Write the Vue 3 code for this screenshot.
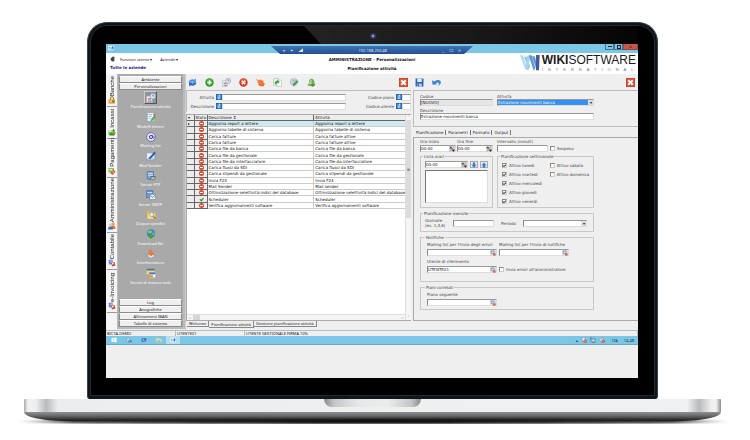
<script setup>
import { ref } from 'vue'

const modules = [
  { name: 'Banche', icon: 'lock', length: 31 },
  { name: 'Incassi', icon: 'in', length: 32 },
  { name: 'Pagamenti', icon: 'out', length: 39 },
  { name: 'Amministrazione', icon: 'people', length: 55 },
  { name: 'Contabile', icon: 'ledger', length: 37 },
  { name: 'e-Invoicing', icon: 'ledger', length: 43 }
]
const tools = [
  { name: 'Pianificazione attività', icon: 'plan' },
  { name: 'Modelli lettere', icon: 'doc' },
  { name: 'Mailing list', icon: 'at' },
  { name: 'Mail Sender', icon: 'pen' },
  { name: 'Server FTP', icon: 'server' },
  { name: 'Server SMTP', icon: 'smtp' },
  { name: 'Output specifici', icon: 'folder' },
  { name: 'Download file', icon: 'globe' },
  { name: 'Interfacciatore', icon: 'plug' },
  { name: 'Servizi di incasso web', icon: 'web' }
]
const sections = ['Log', 'Anagrafiche', 'Allineamenti IBAN', 'Tabelle di sistema']
const actions = [
  { name: 'Aggiorna', icon: 'refresh' },
  { name: 'Nuovo', icon: 'add' },
  { name: 'Pianifica', icon: 'plan' },
  { name: 'Elimina', icon: 'remove' },
  { name: 'Seleziona', icon: 'hand' },
  { name: 'Esporta', icon: 'copy' },
  { name: 'Verifica', icon: 'check' },
  { name: 'Avvisi', icon: 'bell' }
]
const rows = [
  ['Aggiorna report a lettere', 'Aggiorna report a lettere'],
  ['Aggiorna tabelle di sistema', 'Aggiorna tabelle di sistema'],
  ['Carica fatture', 'Carica fatture attive'],
  ['Carica fatture', 'Carica fatture attive'],
  ['Carica file da banca', 'Carica file da banca'],
  ['Carica file da gestionale', 'Carica file da gestionale'],
  ['Carica file da interfacciatore', 'Carica file da interfacciatore'],
  ['Carica flussi da SDI', 'Carica flussi da SDI'],
  ['Carica stipendi da gestionale', 'Carica stipendi da gestionale'],
  ['Invia F24', 'Invia F24'],
  ['Mail Sender', 'Mail sender'],
  ['Ottimizzazione selettività indici del database', 'Ottimizzazione selettività indici del database'],
  ['Scheduler', 'Scheduler'],
  ['Verifica aggiornamenti software', 'Verifica aggiornamenti software']
]
const days = ref([
  { name: 'Attivo lunedì', on: true },
  { name: 'Attivo sabato', on: false },
  { name: 'Attivo martedì', on: true },
  { name: 'Attivo domenica', on: false },
  { name: 'Attivo mercoledì', on: true },
  { name: 'Attivo giovedì', on: true },
  { name: 'Attivo venerdì', on: true }
])
</script>

<template>
  <svg class="sprite" aria-hidden="true">
    <symbol id="refresh" viewBox="0 0 16 16"><path d="M1 8a7 6 0 0 1 10-5l3-2v7H7l2-2a4 3 0 0 0-4 2z" fill="#4a90e2" /><path d="M15 8a7 6 0 0 1-10 5l-3 2V8h7l-2 2a4 3 0 0 0 4-2z" fill="#2668c6" /></symbol>
    <symbol id="add" viewBox="0 0 16 16"><circle cx="8" cy="8" r="7.5" fill="#2f9a2b" /><circle cx="8" cy="6" r="5" fill="#5dbb4e" opacity=".6" /><path d="M8 4v8M4 8h8" stroke="#fff" stroke-width="2.6" /></symbol>
    <symbol id="remove" viewBox="0 0 16 16"><circle cx="8" cy="8" r="7.5" fill="#d93a22" /><circle cx="8" cy="6" r="5" fill="#f27a5c" opacity=".5" /><path d="M5 5l6 6M11 5l-6 6" stroke="#fff" stroke-width="2.4" /></symbol>
    <symbol id="plan" viewBox="0 0 16 16"><path d="M1 5h9v10H1z" fill="#f4f6fa" stroke="#a3adc4" /><path d="M3 8h5v3H3z" fill="#e08a66" /><path d="M3 12h6v2H3z" fill="#7f90b5" /><circle cx="11" cy="5" r="4.500" fill="#dbe9f8" stroke="#6d90c2" /><path d="M11 2.500V5h2" stroke="#446" fill="none" /></symbol>
    <symbol id="hand" viewBox="0 0 16 16"><path d="M0 2l6 2 2-2 2 3 3-1v4l3 2-3 5-6-1-3-2 1-2-3-2 2-1z" fill="#ee6a2c" /><path d="M2 3l8 7" stroke="#f9b27f" stroke-width="1.5" /></symbol>
    <symbol id="copy" viewBox="0 0 16 16"><path d="M1 1h9v12H1z" fill="#eef4ec" stroke="#a4b8a2" /><path d="M7 4h8v11H7z" fill="#fff" stroke="#a4b8a2" /><path d="M3 10a5 5 0 0 1 5-5V3l4 4-4 3V8q-2 0-2 4z" fill="#3da23d" /></symbol>
    <symbol id="check" viewBox="0 0 16 16"><ellipse cx="7" cy="7" rx="6.500" ry="6" fill="#e4e9ec" stroke="#8b99a4" /><path d="M3 4h8M3 7h8M3 10h5" stroke="#6c86b5" /><path d="M5 15l1-5 6-6 3 2-6 7z" fill="#4c9a51" /></symbol>
    <symbol id="bell" viewBox="0 0 16 16"><path d="M8 1q6 2 5 8l2 3-2 2H3l-2-2 3-3q-2-6 4-8z" fill="#6ab14f" /><path d="M5 6q0-3 3-4v9H4z" fill="#b5dca0" /><circle cx="10" cy="13" r="2.500" fill="#647c57" /></symbol>
    <symbol id="close" viewBox="0 0 16 16"><path d="M0 0h16v16H0z" fill="#b9412b" /><path d="M1 1h14v14H1z" fill="#e25138" /><path d="M4 4l8 8M12 4l-8 8" stroke="#fff" stroke-width="3.4" /></symbol>
    <symbol id="save" viewBox="0 0 16 16"><path d="M1 1h13l1 1v13H1z" fill="#2d67b8" /><path d="M4 1h8v6H4z" fill="#e8f0fa" /><path d="M4 10h8v5H4z" fill="#bcd0ea" /><path d="M5 11h2v3H5z" fill="#23477e" /></symbol>
    <symbol id="undo" viewBox="0 0 16 16"><path d="M0 4l1 8 8-1-2-2q3-2 5 0 1 2-1 5 5-3 5-7-3-6-12-1z" fill="#3c83d8" /></symbol>
    <symbol id="info" viewBox="0 0 16 16"><path d="M0 0h16v16H0z" fill="#1f5aa8" /><path d="M2 2h12v12H2z" fill="#4f94dc" /><path d="M9 2v3M9 6q-3 5-1 8" stroke="#fff" stroke-width="2.4" fill="none" /></symbol>
    <symbol id="stop" viewBox="0 0 16 16"><circle cx="8" cy="8" r="8" fill="#e2482c" /><path d="M3 6.4h10v3.2H3z" fill="#fff" /></symbol>
    <symbol id="ok" viewBox="0 0 16 16"><path d="M1 8l4-2 2 3 6-7 3 2-8 11z" fill="#35923a" /></symbol>
    <symbol id="doc" viewBox="0 0 16 16"><path d="M2 1h11v14H2z" fill="#f4f7fb" stroke="#8397b5" /><path d="M4 4h6M4 7h5M4 10h4" stroke="#6e95cf" /><path d="M7 13l6-8 3 3-7 7z" fill="#52b14a" /><path d="M12 3l3 3" stroke="#e2543c" stroke-width="2" /></symbol>
    <symbol id="at" viewBox="0 0 16 16"><circle cx="8" cy="8" r="7" fill="#e2e2f4" stroke="#6a6bb4" stroke-width="1.4" /><circle cx="8" cy="8" r="2.5" fill="none" stroke="#3e3f98" stroke-width="1.6" /><path d="M10.500 5v4q1 2 2.500 0V7" fill="none" stroke="#3e3f98" stroke-width="1.400" /></symbol>
    <symbol id="pen" viewBox="0 0 16 16"><path d="M1 3h13v11H1z" fill="#eef3fa" stroke="#8297bd" /><path d="M1 14l6-5 7 5" stroke="#8297bd" fill="none" /><path d="M4 12L13 1l3 2-9 10z" fill="#2b62b4" /></symbol>
    <symbol id="server" viewBox="0 0 16 16"><path d="M2 1h10v12H2z" fill="#7ba6dc" stroke="#3d659f" /><path d="M3 4h8M3 7h8" stroke="#fff" /><path d="M8 8h7v6H6z" fill="#3970bd" /><path d="M9 10h5v3H8z" fill="#f2c44f" /></symbol>
    <symbol id="smtp" viewBox="0 0 16 16"><path d="M1 1h10v11H1z" fill="#6c9ad6" stroke="#3d659f" /><path d="M2 4h8" stroke="#fff" /><path d="M6 7h9v8H6z" fill="#f3f6fa" stroke="#7385a8" /><path d="M6 8l4 4 5-4" stroke="#3b9c44" fill="none" stroke-width="1.500" /></symbol>
    <symbol id="folder" viewBox="0 0 16 16"><path d="M1 2h6l1 2h7v10H2z" fill="#f0b93d" /><path d="M4 6h11l-2 8H2z" fill="#fbdc7c" /><circle cx="9" cy="7" r="3.500" fill="#d9eaf6" stroke="#7e8d9d" /><path d="M11 10l4 4" stroke="#b97724" stroke-width="2" /></symbol>
    <symbol id="globe" viewBox="0 0 16 16"><circle cx="8" cy="7" r="6.500" fill="#3f86cf" /><path d="M3 3l5-1 2 3-3 2-4-1zM10 6l4 1-3 4z" fill="#7ccf5e" /><path d="M6 7h4v4h3l-5 5-5-5h3z" fill="#3fa23b" /></symbol>
    <symbol id="plug" viewBox="0 0 16 16"><path d="M1 11l7-4 7 4-7 4z" fill="#dfe5ee" stroke="#7787a2" /><path d="M5 1h5l1 5h3l-6 6-5-6h2z" fill="#ea7b36" /></symbol>
    <symbol id="web" viewBox="0 0 16 16"><path d="M1 1h13v9H1z" fill="#f6d469" /><path d="M1 1h13v3H1z" fill="#3c74c6" /><path d="M5 7h10v8H5z" fill="#eef3fa" /><path d="M5 7h10v3H5z" fill="#3c74c6" /><path d="M4 11h7v4H4z" fill="#ef9637" /></symbol>
    <symbol id="lock" viewBox="0 0 16 16"><path d="M5 8V4a3 3 0 0 1 6 0v4" fill="none" stroke="#a17a2b" stroke-width="2" /><path d="M1 7h13v8H1z" fill="#d8992b" /><path d="M3 9h6v3H3z" fill="#f7d77b" /><path d="M9 9h2v4H9z" fill="#6b4912" /></symbol>
    <symbol id="in" viewBox="0 0 16 16"><path d="M1 4h13v10H1z" fill="#75c553" /><path d="M1 4h6v4H1z" fill="#d9efb9" /><path d="M10 1l3 3-3 3zM3 13l4-5v3h6v4H3z" fill="#2f8e33" /><path d="M11 8h4v3h-4z" fill="#e8754a" /></symbol>
    <symbol id="out" viewBox="0 0 16 16"><path d="M1 2h11v9H1z" fill="#7cc75b" /><path d="M3 4h6v3H3z" fill="#dff0c2" /><path d="M6 9l5-4 4 5-6 6-4-3z" fill="#e0603a" /><path d="M9 9l3 2" stroke="#fbd29a" stroke-width="2" /></symbol>
    <symbol id="people" viewBox="0 0 16 16"><circle cx="10" cy="4" r="3.500" fill="#e4a45c" /><path d="M5 14q0-7 5-7t5 7z" fill="#e8722f" /><circle cx="5" cy="6" r="3" fill="#f0c390" /><path d="M0 15q0-6 5-6t5 6z" fill="#3d72c2" /></symbol>
    <symbol id="ledger" viewBox="0 0 16 16"><path d="M1 2l8-1 1 9-8 1z" fill="#5d8fd2" /><path d="M3 4l4-1v3z" fill="#dce9f8" /><path d="M6 7l7-1 2 7-7 2z" fill="#d7483c" /><path d="M7 6l5 2-3 4z" fill="#f1f2f5" /></symbol>
    <symbol id="pick" viewBox="0 0 16 16"><path d="M0 0h16v16H0z" fill="#dcdcdc" /><circle cx="7" cy="6" r="4" fill="#cfe4f7" stroke="#4f83bf" stroke-width="2" /><path d="M8 9h7v6H8z" fill="#dd6546" /></symbol>
    <symbol id="spin" viewBox="0 0 16 16"><path d="M0 0h16v16H0z" fill="#d6d3ce" /><path d="M2 6l3-4 3 4zM8 10h7l-3 5zM3 14L13 3" fill="#222" stroke="#444" /></symbol>
    <symbol id="down" viewBox="0 0 16 16"><path d="M5 1h6v6h4l-7 8-7-8h4z" fill="#377fdd" /></symbol>
    <symbol id="up" viewBox="0 0 16 16"><path d="M5 15h6V9h4L8 1 1 9h4z" fill="#377fdd" /></symbol>
    <symbol id="windows" viewBox="0 0 16 16"><path d="M1 3l6-1v5H1zM8 2l7-1v6H8zM1 8h6v5l-6-1zM8 8h7v6l-7-1z" fill="#fff" /></symbol>
    <symbol id="manager" viewBox="0 0 16 16"><path d="M3 1h5v12H3z" fill="#e8eef5" stroke="#50709c" /><path d="M6 9h9v5H6z" fill="#3c6cae" /><path d="M7 10h4v2H7z" fill="#dfe9f5" /></symbol>
    <symbol id="shell" viewBox="0 0 16 16"><path d="M2 3h13l-2 10H1z" fill="#3372bd" /><path d="M4 5l4 3-4 3M8 11h4" stroke="#e7f2fc" stroke-width="1.500" fill="none" /></symbol>
    <symbol id="files" viewBox="0 0 16 16"><path d="M1 3h6l1 2h7v9H1z" fill="#f3dd8d" /><path d="M4 9h8v5H4z" fill="#87b9dd" /></symbol>
    <symbol id="wiki" viewBox="0 0 16 16"><path d="M1 2h14v12H1z" fill="#f4f8fc" /><path d="M2 5h3l2 7H5zM6 5h3l2 7H9z" fill="#6aa5df" /><path d="M10 4h4v8h-2z" fill="#2c5fae" /></symbol>
    <symbol id="tray" viewBox="0 0 16 16"><path d="M3 1h8v11H3z" fill="#dceaf2" stroke="#60788a" /><circle cx="11" cy="11" r="4.500" fill="#da4938" /><path d="M9 9l4 4M13 9l-4 4" stroke="#fff" /></symbol>
    <symbol id="network" viewBox="0 0 16 16"><path d="M3 5h11v8H3z" fill="#b6d4e2" stroke="#4e6878" stroke-width="1.500" /><path d="M1 1v7M1 2h5M6 15h6" stroke="#4e6878" stroke-width="1.500" /></symbol>
    <symbol id="audio" viewBox="0 0 16 16"><path d="M1 6h3l6-5v14l-6-5H1z" fill="#e9f2f6" stroke="#60788a" /><circle cx="11" cy="11" r="4.500" fill="#da4938" /><path d="M9 11h4" stroke="#fff" stroke-width="1.500" /></symbol>
    <symbol id="mark" viewBox="0 0 60 48"><path d="M0 1h9l9 29-3 12z" fill="#b4dcf2" /><path d="M12 5h9l9 29-4 12z" fill="#8ec6e8" /><path d="M15 42l6-40h10l-7 44z" fill="#a4d5ef" /><path d="M26 1h9l11 38-5 8z" fill="#5c9bd2" /><path d="M36 4h8l10 34-4 8z" fill="#6d8fc8" /><path d="M48 0h11l-2 46h-9z" fill="#3f5ca3" /></symbol>
    <symbol id="apple" viewBox="0 0 16 16"><path d="M1 8l5-6 5-1-2 3 5-1-3 4 3 1-4 1 3 5-5-1 1 3-5-3z" fill="#444" /></symbol>
  </svg>

  <main class="stage">
    <div class="lid">
      <div class="camera"></div>
      <div class="screen">
        <div class="titlebar">
          <svg class="app-icon"><use href="#wiki" /></svg>
          <div class="remote">
            <span>▾</span><span>✦</span><span class="signal"></span>
            <span class="address">192.168.250.48</span>
            <span>_</span><span>❐</span><span>✕</span>
          </div>
          <div class="window-buttons">
            <button aria-label="Riduci"><i class="min"></i></button>
            <button aria-label="Ingrandisci"><i class="max"></i></button>
            <button class="quit" aria-label="Chiudi">x</button>
          </div>
        </div>

        <header class="header">
          <div class="menus">
            <nav>
              <svg class="ico"><use href="#apple" /></svg>
              <a href="#">Funzioni utente ▾</a>
              <a href="#">Aziende ▾</a>
            </nav>
            <strong>Tutte le aziende</strong>
          </div>
          <div class="heading">
            <h1>AMMINISTRAZIONE - Personalizzazioni</h1>
            <h2>Pianificazione attività</h2>
          </div>
          <div class="brand">
            <svg class="mark"><use href="#mark" /></svg>
            <div>
              <div class="word"><b>WIKI</b>SOFTWARE</div>
              <div class="sub">INTERNATIONAL</div>
            </div>
          </div>
        </header>

        <div class="work">
          <nav class="modules">
            <a v-for="m in modules" :key="m.name" href="#" :style="{ height: m.length + 'px' }">
              <span>{{ m.name }}</span>
              <svg class="ico"><use :href="'#' + m.icon" /></svg>
            </a>
          </nav>

          <aside class="sidebar">
            <button class="section">Ambiente</button>
            <button class="section">Personalizzazioni</button>
            <div class="tools">
              <a v-for="(t, i) in tools" :key="t.name" href="#" :class="{ current: i === 0 }">
                <span class="tile"><svg class="ico"><use :href="'#' + t.icon" /></svg></span>
                {{ t.name }}
              </a>
            </div>
            <button v-for="s in sections" :key="s" class="section">{{ s }}</button>
          </aside>

          <section class="list">
            <div class="toolbar">
              <button v-for="a in actions" :key="a.name" :aria-label="a.name"><svg class="ico"><use :href="'#' + a.icon" /></svg></button>
              <button class="end" aria-label="Chiudi elenco"><svg class="ico"><use href="#close" /></svg></button>
            </div>
            <div class="filters">
              <label for="f1">Attività</label><svg class="mini"><use href="#info" /></svg><input id="f1" />
              <label for="f2">Codice piano</label><svg class="mini"><use href="#info" /></svg><input id="f2" />
              <label for="f3">Descrizione</label><svg class="mini"><use href="#info" /></svg><input id="f3" />
              <label for="f4">Codice utente</label><svg class="mini"><use href="#info" /></svg><input id="f4" />
            </div>
            <div class="grid-box">
              <div class="table-area">
                <table>
                  <thead>
                    <tr><th class="c-mark">▾</th><th class="c-state">Stato</th><th class="c-desc">Descrizione <b>↧</b></th><th>Attività</th></tr>
                  </thead>
                  <tbody>
                    <tr v-for="(r, i) in rows" :key="i" :class="{ selected: i === 0 }">
                      <td class="head">{{ i === 0 ? '▸' : '' }}</td>
                      <td class="head"><svg class="state"><use :href="i === 12 ? '#ok' : '#stop'" /></svg></td>
                      <td>{{ r[0] }}</td>
                      <td>{{ r[1] }}</td>
                    </tr>
                  </tbody>
                </table>
              </div>
              <div class="vbar"><span>ˆ</span><div class="vthumb">≡</div><span>ˇ</span></div>
              <div class="hbar"><span>‹</span><div class="hthumb"></div><span class="end">›</span></div>
            </div>
            <nav class="page-tabs">
              <a href="#">Welcome</a><a href="#" class="active">Pianificazione attività</a><a href="#">Gestione pianificazione attività</a>
            </nav>
          </section>

          <section class="detail">
            <div class="toolbar">
              <button aria-label="Salva"><svg class="ico"><use href="#save" /></svg></button>
              <button aria-label="Annulla"><svg class="ico"><use href="#undo" /></svg></button>
              <button class="end" aria-label="Chiudi scheda"><svg class="ico"><use href="#close" /></svg></button>
            </div>
            <div class="record">
              <div class="columns">
                <div class="field"><label for="code">Codice</label><input id="code" class="readonly" value="[NUOVO]" readonly /></div>
                <div class="field"><label for="act">Attività</label>
                  <div class="drop"><select id="act" class="blue"><option>Estrazione movimenti banca</option></select></div>
                </div>
                <div class="field wide"><label for="desc">Descrizione</label><input id="desc" value="Estrazione movimenti banca" /></div>
              </div>
            </div>
            <nav class="form-tabs">
              <a href="#" class="active">Pianificazione</a><a href="#">Parametri</a><a href="#">Formato</a><a href="#">Output</a>
            </nav>
            <div class="panel">
              <div class="form">
                <div class="columns">
                  <div class="pair">
                    <div class="field"><label for="from">Ora inizio</label><div class="combo"><input id="from" value="00:00" /><svg class="mini"><use href="#spin" /></svg></div></div>
                    <div class="field"><label for="to">Ora fine</label><div class="combo"><input id="to" value="00:00" /><svg class="mini"><use href="#spin" /></svg></div></div>
                  </div>
                  <div class="interval">
                    <div class="field"><label for="every">Intervallo (minuti)</label><input id="every" /></div>
                    <label class="tick"><input type="checkbox" />Sospeso</label>
                  </div>
                </div>
                <div class="columns">
                  <fieldset class="hours">
                    <legend>Lista orari</legend>
                    <div class="hour-row">
                      <div class="combo"><input aria-label="Orario" value="00:00" /><svg class="mini"><use href="#spin" /></svg></div>
                      <button aria-label="Aggiungi"><svg class="mini"><use href="#down" /></svg></button>
                      <button aria-label="Togli"><svg class="mini"><use href="#up" /></svg></button>
                    </div>
                    <textarea aria-label="Lista orari"></textarea>
                  </fieldset>
                  <fieldset class="days">
                    <legend>Pianificazione settimanale</legend>
                    <label v-for="d in days" :key="d.name" class="tick"><input v-model="d.on" type="checkbox" />{{ d.name }}</label>
                  </fieldset>
                </div>
                <fieldset class="monthly">
                  <legend>Pianificazione mensile</legend>
                  <label for="dates">Giornate<br />(es. 1,4,6)</label><input id="dates" />
                  <label for="period">Periodo</label>
                  <div class="drop"><select id="period"><option></option></select></div>
                </fieldset>
                <fieldset class="notify">
                  <legend>Notifiche</legend>
                  <div class="field"><label for="m1">Mailing list per l'invio degli errori</label><div class="combo"><input id="m1" /><svg class="mini"><use href="#pick" /></svg></div></div>
                  <div class="field"><label for="m2">Mailing list per l'invio di notifiche</label><div class="combo"><input id="m2" /><svg class="mini"><use href="#pick" /></svg></div></div>
                  <div class="field"><label for="usr">Utente di riferimento</label><div class="combo"><input id="usr" value="UTENTE01" /><svg class="mini"><use href="#pick" /></svg></div></div>
                  <label class="tick"><input type="checkbox" />Invia errori all'amministratore</label>
                </fieldset>
                <fieldset class="notify">
                  <legend>Piani correlati</legend>
                  <div class="field"><label for="next">Piano seguente</label><div class="combo"><input id="next" /><svg class="mini"><use href="#pick" /></svg></div></div>
                </fieldset>
              </div>
            </div>
          </section>
        </div>

        <footer class="status"><span>BICTA-DEMO</span><span>UTENTE01</span><span>UTENTE GESTIONALE FIRMA 10%</span></footer>
        <div class="taskbar">
          <button v-for="t in ['windows', 'manager', 'shell', 'files', 'wiki']" :key="t" :aria-label="t" :class="{ open: t === 'wiki' }"><svg class="mini"><use :href="'#' + t" /></svg></button>
          <div class="tray">
            <span>▴</span>
            <svg class="mini"><use href="#tray" /></svg><svg class="mini"><use href="#network" /></svg><svg class="mini"><use href="#audio" /></svg>
            <span class="lang">ITA</span><time>14:48</time>
          </div>
        </div>
      </div>
    </div>
    <div class="deck"><div class="notch"></div></div>
    <div class="under"></div>
    <div class="shadow"></div>
  </main>
</template>

<style>
body { margin: 0; background: #fff; }
</style>

<style scoped>
* { box-sizing: border-box; }
.sprite { position: absolute; width: 0; height: 0; }
.stage {
  padding: 22px 29px 0 24px;
  font: 4px/5px "DejaVu Sans", sans-serif;
  color: #222;
}
button, input, select, textarea { font: inherit; color: inherit; margin: 0; padding: 0; border: 0; border-radius: 0; min-width: 0; outline: 0; }
button { background: none; display: flex; align-items: center; justify-content: center; }
a { color: inherit; text-decoration: none; }
label { white-space: nowrap; color: #444; }
.ico { width: 9px; height: 9px; display: block; flex: none; }
.mini { width: 6px; height: 6px; display: block; flex: none; }

/* laptop */
.lid {
  position: relative;
  margin: 0 63px;
  padding: 21px 19px 20px 18px;
  border-radius: 20px 20px 3px 3px;
  background: #000;
  border: 1px solid #3b4045;
  border-bottom-color: #10171d;
  box-shadow: inset 0 0 0 2px #0f151a, inset 0 0 0 3px #23292e;
}
.lid::before {
  content: "";
  position: absolute;
  inset: 3px 20px auto 216px;
  height: 18px;
  background: linear-gradient(90deg, #232323, #191919 50%, #050505);
  clip-path: polygon(0 0, 100% 0, 100% 100%, 17px 100%);
}
.camera {
  position: absolute;
  left: 50%;
  top: 10px;
  width: 6px;
  height: 6px;
  margin-left: -3px;
  border-radius: 50%;
  background: radial-gradient(circle, #7d92d8 0 1px, #1f2a60 2px, #3c3c40 3px);
}
.screen { position: relative; background: #efefef; padding-bottom: 33px; overflow: hidden; }
.deck {
  height: 13px;
  border-radius: 1px;
  background: linear-gradient(90deg, #aaa 0, #f2f2f2 4px, #eee 12px, #b9babc 22px, #eceded 34px, #f0f1f1 calc(100% - 34px), #b9babc calc(100% - 22px), #eee calc(100% - 10px), #f2f2f2 calc(100% - 5px), #8d8a90 100%);
}
.notch {
  width: 97px;
  height: 8px;
  margin: 0 auto;
  border-radius: 0 0 8px 8px;
  background: linear-gradient(90deg, #87888a, #c4c5c7 10%, #e6e7e8 35%, #ececed 65%, #c4c5c7 90%, #87888a);
}
.under {
  height: 9px;
  border-radius: 0 0 40px 40px / 0 0 9px 9px;
  background: linear-gradient(#8f9193, #6a6b6d 40%, #1c1c1c);
}
.shadow {
  height: 5px;
  margin: -2px -10px 0 -9px;
  border-radius: 50%;
  background: linear-gradient(90deg, #0000, #222 8%, #111 50%, #222 92%, #0000);
  filter: blur(1px);
}

/* title bar and header */
.titlebar { display: flex; justify-content: space-between; height: 9px; background: #7cc6e6; position: relative; }
.app-icon { width: 6px; height: 6px; margin: 1px 2px; }
.remote {
  position: absolute;
  left: 31%;
  right: 31%;
  top: 2px;
  height: 8px;
  display: flex;
  align-items: center;
  gap: 5px;
  padding: 0 12px;
  color: #dfe8f5;
  background: linear-gradient(#3f74b2, #234f95);
  clip-path: polygon(0 0, 100% 0, calc(100% - 9px) 100%, 9px 100%);
}
.signal { width: 5px; height: 4px; background: #dfe8f5; clip-path: polygon(0 100%, 100% 0, 100% 100%); }
.address { flex: 1; text-align: center; font-family: "Noto Sans", sans-serif; }
.window-buttons { display: flex; height: 6px; }
.window-buttons button { width: 9px; border: 1px solid #47748a; border-top: 0; color: #222; }
.window-buttons .quit { width: 15px; background: #c6554d; border-color: #96453f; }
.min { width: 4px; height: 1px; background: #222; }
.max { width: 4px; height: 4px; border: 1px solid #222; }
.header {
  display: grid;
  grid-template-columns: 1fr auto 1fr;
  height: 21px;
  background: #fff;
}
.menus { padding: 2px 4px; }
.menus nav { display: flex; align-items: center; gap: 8px; height: 8px; font-family: "Noto Sans", sans-serif; }
.menus .ico { width: 6px; height: 6px; margin-right: -4px; }
.menus strong { display: block; color: #20208c; line-height: 10px; }
.heading { text-align: center; padding-top: 2px; }
.heading h1, .heading h2 { font-size: 4px; line-height: 9px; margin: 0; color: #111; white-space: nowrap; }
.brand { display: flex; justify-content: flex-end; gap: 2px; padding: 1px 2px 0 0; font-family: "Liberation Sans", sans-serif; color: #1c1c20; }
.mark { width: 20px; height: 16px; flex: none; margin-top: 1px; }
.word { font-size: 12px; line-height: 12px; white-space: nowrap; }
.sub { letter-spacing: 5px; color: #6576a5; white-space: nowrap; line-height: 6px; margin: 1px -5px 0 0; }

/* work area */
.work { display: grid; grid-template-columns: 11px 68px 226fr 227fr; height: 256px; background: #efefef; }
.modules { background: #f4f4f4; font: 6px/9px "Liberation Sans", sans-serif; padding: 2px 0 0 1px; }
.modules a { display: flex; flex-direction: column; align-items: center; justify-content: flex-end; border-bottom: 1px solid #999; padding-bottom: 2px; }
.modules span { writing-mode: vertical-rl; transform: rotate(180deg); width: 9px; white-space: nowrap; }
.modules .ico { width: 8px; height: 8px; }
.sidebar { display: flex; flex-direction: column; background: #a9a9a9; border: solid #bbb; border-width: 0 2px 2px 1px; padding: 2px 1px 0; margin-bottom: 1px; font-family: "Noto Sans", sans-serif; }
.section { height: 7px; flex: none; background: #efefef; border: 1px solid #8b8b8b; border-top-color: #fff; line-height: 5px; }
.tools { flex: 1; display: grid; grid-auto-rows: 1fr; padding: 1px 0 13px; color: #fff; text-align: center; }
.tools a { display: flex; flex-direction: column; align-items: center; white-space: nowrap; }
.tile { width: 13px; height: 13px; display: grid; place-items: center; }
.tile .ico { width: 10px; height: 10px; }
.current .tile { background: #929292; border: 1px solid; border-color: #ccc #555 #555 #ccc; }
.toolbar { display: flex; align-items: center; gap: 8px; height: 16px; padding: 0 3px 0 2px; }
.toolbar .end { margin-left: auto; }

.list { border-left: 1px solid #ccc; display: flex; flex-direction: column; min-width: 0; }
.filters {
  display: grid;
  grid-template-columns: 29px 6px 1fr 50px 6px 9px;
  grid-auto-rows: 7px;
  row-gap: 2px;
  align-items: stretch;
  padding: 3px 0 2px;
  margin-bottom: 2px;
  border: solid #bcbcbc;
  border-width: 1px 0 0 1px;
}
.filters label { text-align: right; padding-right: 2px; line-height: 7px; }
.filters input { background: #fff; border: 1px solid #ddd; border-top-color: #999; width: 100%; }
.grid-box {
  flex: 1;
  display: grid;
  grid-template: "t v" 1fr "h v" 6px / 1fr 6px;
  background: #fff;
  border: 1px solid #aaa;
  border-right: 0;
  min-height: 0;
}
.table-area { min-width: 0; overflow: hidden; }
table { width: 100%; height: 94px; border-collapse: collapse; table-layout: fixed; border-bottom: 1px solid #aaa; }
th, td { padding: 0 0 0 1px; border: solid #ccc; border-width: 0 1px 1px 0; text-align: left; font-weight: normal; white-space: nowrap; overflow: hidden; line-height: 5px; color: #111; }
th { background: #ececec; border-color: #666; }
th:last-child, td:last-child { border-right: 0; }
.c-mark { width: 7px; }
.c-state { width: 13px; }
.c-desc { width: 49%; }
td.head { background: #ececec; border-color: #666; }
.state { width: 5px; height: 5px; display: block; margin: 0 auto; }
.selected td:not(.head) { background: #cdebf0; }
.vbar { grid-area: v; background: #f5f5f5; display: flex; flex-direction: column; align-items: center; color: #666; border-left: 1px solid #ddd; }
.vthumb { width: 100%; height: 98px; background: #dcdcdc; display: grid; place-items: center; margin-bottom: auto; }
.hbar { grid-area: h; background: #f5f5f5; display: flex; align-items: center; border-top: 1px solid #ddd; color: #555; padding: 0 2px; gap: 2px; }
.hthumb { width: 7px; height: 5px; background: #d6d6d6; }
.hbar .end { margin-left: auto; }
.page-tabs { display: flex; height: 9px; padding-left: 1px; }
.page-tabs a { height: 6px; line-height: 6px; padding: 0 2px; border: solid #888; border-width: 0 1px 1px 0; white-space: nowrap; font-family: "Noto Sans", sans-serif; }
.page-tabs .active { height: 7px; line-height: 7px; }

.detail { display: flex; flex-direction: column; min-width: 0; padding-left: 2px; }
.record { border: solid #bcbcbc; border-width: 1px 0 1px 1px; padding: 3px 0 6px 6px; }
.record .columns, .form { width: 80%; }
.columns { display: grid; grid-template-columns: 3fr 4fr; column-gap: 4px; row-gap: 2px; }
.wide { grid-column: 1 / -1; }
.field { display: flex; flex-direction: column; gap: 1px; min-width: 0; }
.field label { line-height: 5px; }
.field input, .combo, .monthly input, .drop { background: #fff; border: 1px solid #ddd; border-top-color: #999; border-left-color: #888; height: 7px; width: 100%; line-height: 5px; }
.record .field { gap: 0; }
.field .readonly { background: #e6e6e6; }
.combo { display: flex; }
.combo input, .field .combo input { border: 0; height: 5px; flex: 1; width: 0; background: none; }
.drop { position: relative; min-width: 0; }
.drop select { appearance: none; display: block; width: calc(100% - 5px); height: 100%; line-height: 5px; background: #fff; }
.drop .blue { background: #3390f5; color: #fff; }
.drop::after { content: "▾"; position: absolute; right: 0; top: 0; bottom: 0; width: 5px; background: #ddd; text-align: center; line-height: 5px; color: #111; }
.form-tabs { display: flex; align-items: center; height: 10px; padding-left: 1px; }
.form-tabs a { padding: 0 2px; border-right: 1px solid #777; line-height: 5px; }
.panel { flex: 1; border: solid #aaa; border-width: 1px 0 1px 1px; padding: 1px 0 0 6px; margin-bottom: 9px; }
.form { display: flex; flex-direction: column; gap: 3px; }
.form > .columns:first-child { margin-bottom: -1px; }
.pair { display: grid; grid-template-columns: 1fr 1fr; gap: 1px; }
.interval { display: grid; grid-template-columns: 51px 1fr; gap: 2px; align-items: end; }
.tick { display: flex; align-items: center; gap: 2px; height: 7px; }
.tick input { appearance: none; width: 5px; height: 5px; background: #fff; border: 1px solid #ccc; border-top-color: #888; border-left-color: #888; position: relative; flex: none; }
.tick input:checked::before { content: ""; position: absolute; inset: 0; background: #111; clip-path: polygon(0 40%, 35% 65%, 100% 0, 100% 40%, 35% 100%, 0 75%); }
fieldset { margin: 0; border: 1px solid #c8c8c8; padding: 0 4px; min-width: 0; }
legend { padding: 0 1px; margin-left: -2px; line-height: 5px; height: 5px; color: #444; }
.hours { display: flex; flex-direction: column; padding: 2px 4px 4px; height: 54px; }
.hour-row { display: flex; gap: 2px; height: 7px; margin-bottom: 2px; }
.hour-row .combo { flex: 1; }
.hour-row button { width: 8px; background: #e8e8e8; border: 1px solid #aaa; }
textarea { display: block; width: 100%; height: 34px; resize: none; background: #fff; border: 1px solid #ddd; border-top-color: #777; border-left-color: #777; }
.days { display: grid; grid-template-columns: 6fr 5fr; grid-auto-rows: 9px; align-items: center; align-content: start; padding: 2px 4px 0; }
.days .tick:nth-of-type(n + 5) { grid-column: 1; }
.monthly { display: grid; grid-template-columns: 26px 41px 1fr 64px; align-items: center; column-gap: 2px; padding: 2px 6px 4px 4px; height: 21px; }
.monthly label[for="period"] { padding-left: 5px; }
.notify { display: grid; grid-template-columns: 70px 70px; column-gap: 2px; row-gap: 3px; padding: 2px 6px 3px; align-items: end; }
.notify .field { gap: 2px; }
.notify:nth-of-type(2) { padding-bottom: 8px; }

/* bottom bars */
.status { display: grid; grid-template-columns: 70px 69px 1fr; height: 6px; border-top: 1px solid #bbb; line-height: 5px; font-family: "Noto Sans", sans-serif; }
.status span { border-right: 1px solid #bbb; padding-left: 1px; white-space: nowrap; }
.taskbar { display: flex; height: 9px; background: #7cc6e6; border-bottom: 1px solid #6aa9c6; }
.taskbar button { width: 15px; }
.taskbar .open { background: #b4def0; width: 14px; }
.tray { margin-left: auto; display: flex; align-items: center; gap: 3px; padding-right: 4px; font-family: "Noto Sans", sans-serif; color: #234; }
.tray .lang { margin: 0 3px 0 4px; }
</style>
